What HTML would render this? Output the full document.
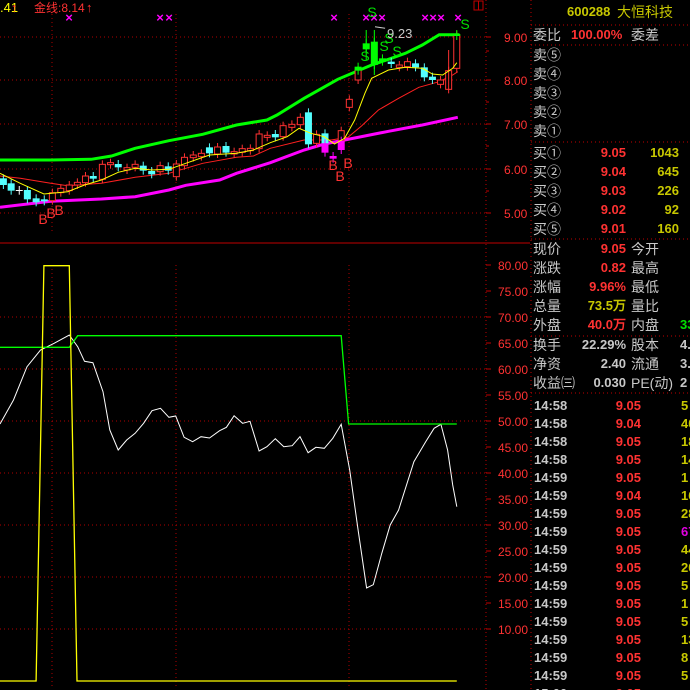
<!DOCTYPE html>
<html><head><meta charset="utf-8"><style>
html,body{margin:0;padding:0;background:#000;width:690px;height:690px;overflow:hidden}
#w{position:relative;width:690px;height:690px;font-family:"Liberation Sans","Noto Sans CJK SC",sans-serif}
.t{position:absolute;white-space:nowrap;font-size:14px;line-height:16px}
.g{color:#c8c8c8}.r{color:#ff3232}.y{color:#c8c800}.gr{color:#00e000}.m{color:#e000e0}
.n{font-family:"Liberation Sans",sans-serif;font-weight:bold;font-size:13px}
svg{position:absolute;left:0;top:0}
</style></head><body><div id="w">
<svg id="s" width="690" height="690" xmlns="http://www.w3.org/2000/svg"></svg>
<div id="p"></div>
</div>
<script>
var s=document.getElementById('s'),h='';
function L(x1,y1,x2,y2,c,d,w){h+='<line x1="'+x1+'" y1="'+y1+'" x2="'+x2+'" y2="'+y2+'" stroke="'+c+'" stroke-width="'+(w||1)+'"'+(d?' stroke-dasharray="1,3"':'')+'/>';}
function P(pts,c,w,dx,dy,sx,sy){var a=[];for(var i=0;i<pts.length;i+=2)a.push((pts[i]/sx+dx).toFixed(1)+','+(pts[i+1]/sy+dy).toFixed(1));h+='<polyline fill="none" stroke="'+c+'" stroke-width="'+w+'" points="'+a.join(' ')+'"/>';}
function T(x,y,t,c,sz,a,b){h+='<text x="'+x+'" y="'+y+'" fill="'+c+'" font-size="'+sz+'"'+(b?' font-weight="bold"':'')+' font-family="Liberation Sans,Noto Sans CJK SC,sans-serif"'+(a?' text-anchor="'+a+'"':'')+'>'+t+'</text>';}
[37,80,124,169,213].forEach(function(y){L(0,y,486,y,'#b00000',1)});
[52,176,349].forEach(function(x){L(x,14,x,232,'#b00000',1)});
[317,369,421,473,525,577,629].forEach(function(y){L(0,y,486,y,'#b00000',1)});
[52,176,349].forEach(function(x){L(x,265,x,688,'#b00000',1)});
L(0,243,530,243,'#c00000');L(486,0,486,690,'#c00000',2);L(531,0,531,690,'#c00000',2);
[[37,'9.00'],[80,'8.00'],[124,'7.00'],[169,'6.00'],[213,'5.00']].forEach(function(a){L(486,a[0],491,a[0],'#c00000');T(504,a[0]+5,a[1],'#ff3232',12)});
[51,102,146,191].forEach(function(y){L(486,y,489,y,'#c00000')});
for(var v=80;v>=10;v-=5){var y=265+(80-v)*5.2;L(486,y,491,y,'#c00000');T(498,y+5,v.toFixed(2),'#ff3232',12);}
var sx=2.96;
P([0,480,150,480,270,478,330,468,400,445,500,422,600,403,700,375,790,360,820,345,900,295,1000,238,1100,195,1150,178,1200,160,1250,135,1300,104,1360,104],'#00ff00',3,0,0,sx,3);
P([0,622,150,604,300,597,400,590,500,570,550,556,650,540,700,520,800,488,900,450,960,432,1050,414,1150,394,1250,375,1355,352],'#ff00ff',3,0,0,sx,3);
P([0,528,60,535,150,550,200,557,300,550,400,532,500,520,600,490,700,472,750,468,800,445,900,420,980,420,1030,412,1070,378,1120,330,1180,295,1240,262,1300,245,1340,225,1355,215],'#ff2020',1,0,0,sx,3);
var C=[[10,535,555,'c'],[33,550,572,'c'],[57,570,572,'w'],[81,570,598,'c'],[107,595,607,'c'],[131,598,604,'c'],[155,578,602,'r'],[180,565,578,'r'],[205,555,572,'r'],[229,547,555,'r'],[253,528,548,'r'],[276,528,536,'c'],[303,493,538,'r'],[327,488,494,'r'],[350,492,502,'c'],[376,503,510,'r'],[400,493,502,'r'],[424,497,512,'c'],[449,513,523,'c'],[474,497,515,'r'],[498,499,512,'c'],[522,492,530,'r'],[546,472,497,'r'],[572,465,473,'r'],[596,460,470,'r'],[620,442,460,'c'],[644,441,462,'r'],[669,438,458,'c'],[693,455,462,'r'],[717,446,457,'r'],[741,445,452,'r'],[767,402,446,'r'],[791,406,412,'r'],[815,402,412,'c'],[838,377,410,'r'],[864,373,382,'r'],[889,352,374,'r'],[913,337,433,'c'],[937,403,430,'r'],[962,400,430,'c'],[962,430,458,'m'],[986,468,476,'m'],[1010,392,422,'r'],[1010,422,450,'m'],[1034,298,322,'r'],[1060,210,240,'r'],[1060,200,212,'g'],[1084,130,148,'g'],[1108,125,195,'g'],[1132,175,185,'g'],[1158,185,192,'c'],[1182,195,202,'r'],[1206,185,200,'r'],[1230,190,202,'c'],[1256,202,232,'c'],[1280,230,240,'c'],[1304,240,253,'r'],[1328,212,268,'r'],[1352,105,205,'r'],[1352,102,108,'g']];
var col={c:'#54ffff',r:'#ff3232',w:'#ffffff',m:'#ff00ff',g:'#00ff00'};
C.forEach(function(k){var x=k[0]/sx,y1=k[1]/3,y2=k[2]/3,c=col[k[3]];L(x,y1-4,x,y2+4,c);
if(k[3]=='r')h+='<rect x="'+(x-3)+'" y="'+y1+'" width="6" height="'+Math.max(1,y2-y1)+'" fill="#000" stroke="'+c+'"/>';
else h+='<rect x="'+(x-3.5)+'" y="'+y1+'" width="7" height="'+Math.max(1,y2-y1)+'" fill="'+c+'"/>';});
L(1108/sx,30,1108/sx,75,'#00ff00');L(1084/sx,30,1084/sx,60,'#00ff00');L(1328/sx,50,1328/sx,90,'#ff3232');
P([0,520,60,550,130,582,200,575,250,555,300,540,350,517,400,505,450,510,500,508,550,490,620,465,700,460,750,450,800,428,850,410,885,385,920,400,960,410,990,432,1020,415,1050,360,1080,280,1100,235,1150,210,1200,202,1250,205,1280,222,1310,225,1340,205,1352,188],'#ffff00',1,0,0,sx,3);
[69,160,169,334,366,374,382,425,433,441,458].forEach(function(x){T(x,22,'×','#ff00ff',13,'middle',1)});
[[43,224],[51,218],[59,215],[333,170],[340,181],[348,168]].forEach(function(a){T(a[0],a[1],'B','#ff3232',14,'middle')});
[[365,61],[372,17],[384,51],[389,43],[397,56],[465,29]].forEach(function(a){T(a[0],a[1],'S','#00e000',14,'middle')});
T(387,38,'9.23','#c8c8c8',13);P([1110,80,1140,85],'#c8c8c8',1,0,0,sx,3);
h+='<rect x="474" y="1" width="9" height="9" fill="none" stroke="#c00000"/>';L(478.5,1,478.5,10,'#c00000');
T(0,12,'.41','#ffff00',13);T(11,12,'↑','#ff3232',13);T(34,12,'金线:8.14','#ff3232',12);T(86,12,'↑','#ff3232',13);
P([0,552,40,480,80,380,120,330,160,310,205,285,230,320,250,364,275,368,305,455,325,570,350,630,375,600,400,580,425,550,450,512,475,505,500,532,520,528,545,592,570,605,595,590,620,594,650,572,670,562,693,527,718,550,740,544,767,633,790,620,815,596,840,620,865,617,888,590,912,638,935,622,960,625,985,595,1010,553,1035,690,1060,870,1085,1044,1105,1034,1130,940,1155,855,1180,810,1225,665,1260,605,1285,565,1305,553,1325,630,1340,735,1352,800],'#ffffff',1,0,240,sx,3);
P([0,322,205,322,230,287,1010,287,1032,552,1352,552],'#00ff00',1.3,0,240,sx,3);
P([0,1323,107,1323,130,77,205,77,228,1323,1352,1323],'#ffff00',1.3,0,240,sx,3);
[25,45,142,239,336,393].forEach(function(y){L(531,y,690,y,'#c00000',1.5)});
s.innerHTML=h;
var q='';
function D(x,y,t,c,ex,right){q+='<div class="t '+c+' '+(ex||'')+'" style="'+(right?'right:'+(690-x)+'px;':'left:'+x+'px;')+'top:'+(y-8)+'px">'+t+'</div>';}
D(567,12,'600288','y','n');D(617,12,'大恒科技','y');
D(533,35,'委比','g');D(571,35,'100.00%','r','n');D(631,35,'委差','g');
['卖⑤','卖④','卖③','卖②','卖①'].forEach(function(t,i){D(533,55+i*19,t,'g')});
[['买①','9.05','1043'],['买②','9.04','645'],['买③','9.03','226'],['买④','9.02','92'],['买⑤','9.01','160']].forEach(function(a,i){var y=153+i*19;D(533,y,a[0],'g');D(626,y,a[1],'r','n',1);D(679,y,a[2],'y','n',1);});
[['现价','9.05','r','今开'],['涨跌','0.82','r','最高'],['涨幅','9.96%','r','最低'],['总量','73.5万','y','量比'],['外盘','40.0万','r','内盘']].forEach(function(a,i){var y=249+i*19;D(533,y,a[0],'g');D(626,y,a[1],a[2],'n',1);D(631,y,a[3],'g');});
D(680,325,'33','gr','n');
[['换手','22.29%','股本','4.'],['净资','2.40','流通','3.'],['收益㈢','0.030','PE(动)','2']].forEach(function(a,i){var y=345+i*19;D(533,y,a[0],'g');D(626,y,a[1],'g','n',1);D(631,y,a[2],'g');D(680,y,a[3],'g','n');});
var tk=[['14:58','9.05','5','y'],['14:58','9.04','40','y'],['14:58','9.05','18','y'],['14:58','9.05','14','y'],['14:59','9.05','1','y'],['14:59','9.04','16','y'],['14:59','9.05','28','y'],['14:59','9.05','67','m'],['14:59','9.05','44','y'],['14:59','9.05','20','y'],['14:59','9.05','5','y'],['14:59','9.05','1','y'],['14:59','9.05','5','y'],['14:59','9.05','13','y'],['14:59','9.05','8','y'],['14:59','9.05','5','y'],['15:00','9.05','','y']];
tk.forEach(function(a,i){var y=406+i*18;D(534,y,a[0],'g','n');D(641,y,a[1],'r','n',1);D(681,y,a[2],a[3],'n');});
document.getElementById('p').innerHTML=q;
</script>
</body></html>
